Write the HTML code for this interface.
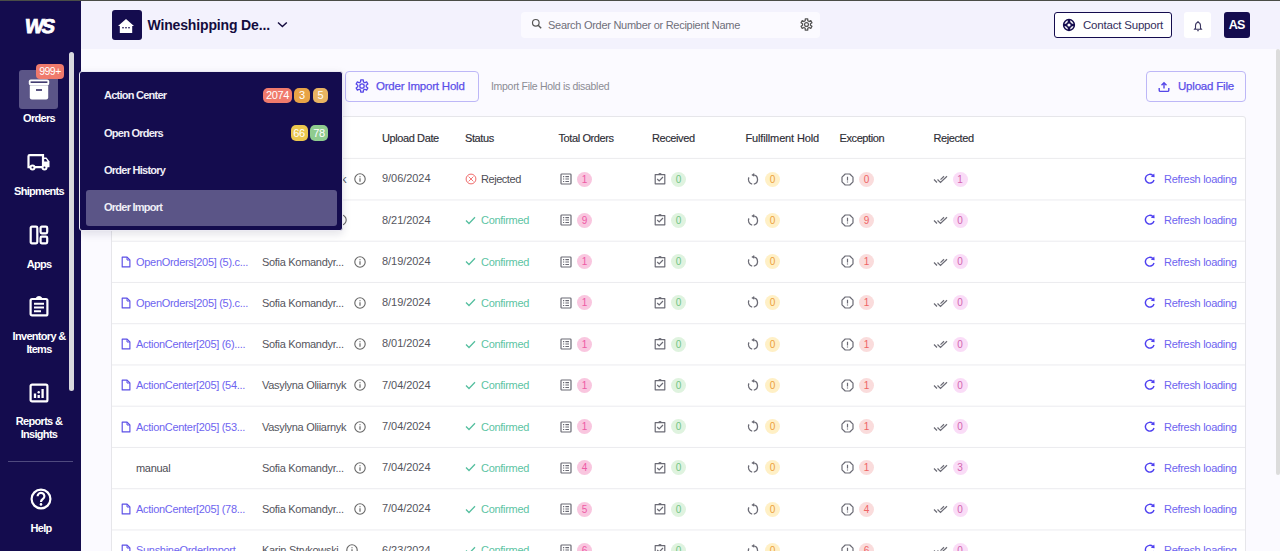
<!DOCTYPE html>
<html><head><meta charset="utf-8">
<style>
*{box-sizing:border-box;margin:0;padding:0}
html,body{width:1280px;height:551px;overflow:hidden;background:#fbfaff;font-family:"Liberation Sans",sans-serif;position:relative}
#topline{position:absolute;left:0;top:0;width:1280px;height:1px;background:#4a4d47;z-index:5}
#side{position:absolute;left:0;top:0;width:81px;height:551px;background:#140c4e}
#header{position:absolute;left:81px;top:1px;width:1199px;height:48px;background:#f3f2fd}
.sl{position:absolute;left:0;width:78px;text-align:center;color:#fff;font-size:11px;font-weight:bold;line-height:14px;letter-spacing:-0.7px;white-space:nowrap}
.th{position:absolute;top:130.5px;font-size:11px;color:#2e2e36;line-height:14px;letter-spacing:-0.4px;white-space:nowrap;-webkit-text-stroke:0.15px #2e2e36}
.t{position:absolute;font-size:11px;color:#4d4d55;line-height:14px;letter-spacing:-0.3px;white-space:nowrap}
.lnk{color:#6e64f0}
.nm{color:#55555d}
.dt{letter-spacing:-0.05px;color:#55555d}
.conf{color:#5cc4a3}
.bd{position:absolute;width:15px;height:15px;border-radius:8px;font-size:10px;line-height:15px;text-align:center}
.mi{position:absolute;left:104px;color:#efeef6;font-size:11px;font-weight:bold;line-height:14px;letter-spacing:-0.75px;white-space:nowrap}
.mb{position:absolute;height:15px;border-radius:5px;color:#fff;font-size:11px;line-height:15px;text-align:center;letter-spacing:-0.4px}
</style></head><body>
<div id="topline"></div>

<div id="header">
  <div style="position:absolute;left:31px;top:9px;width:30px;height:30px;border-radius:3px;background:#140c4e"></div>
  <svg width="18" height="16" viewBox="0 0 18 16" style="position:absolute;left:36.3px;top:17px"><path d="M9 1L17 8H15.2V15H2.8V8H1z" fill="#fff"/><rect x="5.3" y="9" width="1.4" height="1.4" fill="#140c4e"/><rect x="8.3" y="9" width="1.4" height="1.4" fill="#140c4e"/><rect x="11.3" y="9" width="1.4" height="1.4" fill="#140c4e"/></svg>
  <div style="position:absolute;left:66.5px;top:16px;font-size:14px;font-weight:bold;color:#140c3e;letter-spacing:-0.15px;line-height:17px;white-space:nowrap">Wineshipping De...</div>
  <svg width="11" height="7" viewBox="0 0 11 7" style="position:absolute;left:196.2px;top:20.3px"><path d="M1 1.4l4.4 4.2 4.4-4.2" fill="none" stroke="#140c3e" stroke-width="1.4"/></svg>
  <div style="position:absolute;left:440px;top:11px;width:299px;height:26px;border-radius:4px;background:#fbfaff"></div>
  <svg width="12" height="12" viewBox="0 0 12 12" style="position:absolute;left:449.5px;top:17px"><circle cx="4.8" cy="4.8" r="3.3" fill="none" stroke="#555" stroke-width="1.2"/><path d="M7.2 7.2L10.2 10.2" stroke="#555" stroke-width="1.4"/></svg>
  <div style="position:absolute;left:467px;top:17px;font-size:11px;color:#6f6f7a;letter-spacing:-0.28px;line-height:14px;white-space:nowrap">Search Order Number or Recipient Name</div>
  <svg width="13" height="13" viewBox="0 0 24 24" style="position:absolute;left:718.5px;top:17.3px"><path d="M9.59 5.00 L9.80 1.63 L14.20 1.63 L14.41 5.00 L16.85 6.42 L19.88 4.91 L22.08 8.72 L19.26 10.59 L19.26 13.41 L22.08 15.28 L19.88 19.09 L16.85 17.58 L14.41 19.00 L14.20 22.37 L9.80 22.37 L9.59 19.00 L7.15 17.58 L4.12 19.09 L1.92 15.28 L4.74 13.41 L4.74 10.59 L1.92 8.72 L4.12 4.91 L7.15 6.42Z" fill="none" stroke="#555" stroke-width="2.4" stroke-linejoin="round"/><circle cx="12" cy="12" r="3.6" fill="none" stroke="#555" stroke-width="2.2"/></svg>
  <div style="position:absolute;left:972.5px;top:11px;width:118.5px;height:26px;border:1.5px solid #140c4e;border-radius:3px;background:#fff"></div>
  <svg width="14" height="14" viewBox="0 0 14 14" style="position:absolute;left:981px;top:17.2px"><circle cx="7" cy="7" r="5.4" fill="none" stroke="#140c4e" stroke-width="1.5"/><circle cx="7" cy="7" r="2.3" fill="#fff" stroke="#140c4e" stroke-width="1.4"/><path d="M7 1.5v3.5M7 9v3.5M1.5 7h3.5M9 7h3.5" stroke="#140c4e" stroke-width="2.6"/></svg>
  <div style="position:absolute;left:1002px;top:17px;font-size:11.5px;color:#332d5c;letter-spacing:-0.2px;line-height:14px;white-space:nowrap">Contact Support</div>
  <div style="position:absolute;left:1103px;top:11px;width:27px;height:26px;border-radius:3px;background:#fff"></div>
  <svg width="10" height="12" viewBox="0 0 10 12" style="position:absolute;left:1111.5px;top:18.5px"><path d="M5 2.2q2.5.3 2.5 3.6v2.4l.9 1.1H1.6l.9-1.1V5.8Q2.5 2.5 5 2.2z" fill="none" stroke="#3a3560" stroke-width="1.1"/><path d="M5 1v1.2M4.3 10.6h1.4" stroke="#3a3560" stroke-width="1.1"/></svg>
  <div style="position:absolute;left:1142.5px;top:11px;width:26.5px;height:26px;border-radius:3px;background:#140c4e;color:#fff;font-size:12.5px;font-weight:bold;text-align:center;line-height:26px;letter-spacing:-0.6px">AS</div>
</div>

<div id="side">
  <div style="position:absolute;left:24.5px;top:14.5px;width:34px;color:#fff;font-size:20px;font-weight:bold;letter-spacing:-2.2px;line-height:23px;-webkit-text-stroke:0.8px #fff;transform:skewX(-9deg);white-space:nowrap">WS</div>
  <div style="position:absolute;left:69px;top:52px;width:5px;height:338.5px;border-radius:3px;background:#d9d9de"></div>
  <div style="position:absolute;left:19px;top:70px;width:39px;height:39px;border-radius:3px;background:#5b5587"></div>
  <svg width="22" height="22" viewBox="0 0 22 22" style="position:absolute;left:28px;top:78px"><rect x="0.8" y="1.6" width="20.4" height="6" rx="2" fill="#fff"/><rect x="2.6" y="3.5" width="16.8" height="1.3" fill="#140c4e"/><path d="M1.8 7.4h18.4v12a2 2 0 0 1-2 2H3.8a2 2 0 0 1-2-2z" fill="#fff"/><rect x="8" y="11.3" width="6" height="1.4" fill="#140c4e"/></svg>
  <div style="position:absolute;left:36px;top:64px;width:28px;height:15px;border-radius:4px;background:#ef7a6c;color:#fff;font-size:10.5px;line-height:15px;text-align:center;letter-spacing:-0.5px">999+</div>
  <div class="sl" style="top:111px">Orders</div>
  <svg width="24" height="20" viewBox="0 0 24 20" style="position:absolute;left:27px;top:152px"><path d="M1.5 4.3a1.2 1.2 0 0 1 1.2-1.2h13.3v12.1H1.5z" fill="none" stroke="#fff" stroke-width="2.2"/><path d="M16 5.5h3.5l3 4v5.7H16z" fill="#fff"/><path d="M17.2 7h1.8l1.6 2.4h-3.4z" fill="#140c4e"/><circle cx="5.5" cy="15.5" r="3" fill="#fff"/><circle cx="5.5" cy="15.5" r="1" fill="#140c4e"/><circle cx="17.5" cy="15.5" r="3" fill="#fff"/><circle cx="17.5" cy="15.5" r="1" fill="#140c4e"/></svg>
  <div class="sl" style="top:184px">Shipments</div>
  <svg width="20" height="20" viewBox="0 0 20 20" style="position:absolute;left:28.5px;top:224.5px"><rect x="1.7" y="1.7" width="6.6" height="16.6" rx="1.2" fill="none" stroke="#fff" stroke-width="2.2"/><rect x="11.6" y="1.7" width="6.6" height="6.6" rx="1.2" fill="none" stroke="#fff" stroke-width="2.2"/><rect x="11.6" y="11.7" width="6.6" height="6.6" rx="1.2" fill="none" stroke="#fff" stroke-width="2.2"/></svg>
  <div class="sl" style="top:257px">Apps</div>
  <svg width="20" height="22" viewBox="0 0 20 22" style="position:absolute;left:28.5px;top:295px"><rect x="1.6" y="4" width="16.8" height="16.4" rx="1.5" fill="none" stroke="#fff" stroke-width="2.2"/><path d="M7 4q3-4 6 0" fill="#fff" stroke="#fff" stroke-width="1.8"/><path d="M5 8.8h10M5 12.5h10M5 16.3h7" stroke="#fff" stroke-width="2"/></svg>
  <div class="sl" style="top:330px;line-height:13px">Inventory &amp;<br>Items</div>
  <svg width="20" height="20" viewBox="0 0 20 20" style="position:absolute;left:28.5px;top:382.5px"><rect x="1.6" y="1.6" width="16.8" height="16.8" rx="1.5" fill="none" stroke="#fff" stroke-width="2.2"/><path d="M6 10.5v4.5M9.7 12v3M13.6 6v9" stroke="#fff" stroke-width="2.3"/><circle cx="9.7" cy="9.3" r="1.2" fill="#fff"/></svg>
  <div class="sl" style="top:415px;line-height:13px">Reports &amp;<br>Insights</div>
  <div style="position:absolute;left:8px;top:460.5px;width:65px;height:1.5px;background:#4f4a7e"></div>
  <svg width="24" height="24" viewBox="0 0 24 24" style="position:absolute;left:28.6px;top:487px"><circle cx="12" cy="12" r="9.4" fill="none" stroke="#fff" stroke-width="2.2"/><path d="M8.6 9.3a3.4 3.3 0 1 1 5.2 2.7c-1.3.8-1.8 1.5-1.8 2.9" fill="none" stroke="#fff" stroke-width="2.2"/><circle cx="12" cy="17.4" r="1.3" fill="#fff"/></svg>
  <div class="sl" style="top:521px;left:2px">Help</div>
</div>

<div style="position:absolute;left:345px;top:71px;width:134px;height:31px;border:1px solid #bdb7f7;border-radius:4px;background:#fbfaff"></div>
<svg width="14" height="14" viewBox="0 0 24 24" style="position:absolute;left:355px;top:79.3px"><path d="M9.59 5.00 L9.80 1.63 L14.20 1.63 L14.41 5.00 L16.85 6.42 L19.88 4.91 L22.08 8.72 L19.26 10.59 L19.26 13.41 L22.08 15.28 L19.88 19.09 L16.85 17.58 L14.41 19.00 L14.20 22.37 L9.80 22.37 L9.59 19.00 L7.15 17.58 L4.12 19.09 L1.92 15.28 L4.74 13.41 L4.74 10.59 L1.92 8.72 L4.12 4.91 L7.15 6.42Z" fill="none" stroke="#5546e8" stroke-width="2.2" stroke-linejoin="round"/><circle cx="12" cy="12" r="3.8" fill="none" stroke="#5546e8" stroke-width="2.2"/></svg>
<div style="position:absolute;left:376px;top:78.5px;font-size:11.5px;font-weight:normal;-webkit-text-stroke:0.25px #5b4fe9;color:#5b4fe9;letter-spacing:-0.2px;line-height:14px;white-space:nowrap">Order Import Hold</div>
<div style="position:absolute;left:491px;top:80px;font-size:10.5px;color:#8c8c94;letter-spacing:-0.3px;line-height:13px;white-space:nowrap">Import File Hold is disabled</div>
<div style="position:absolute;left:1146px;top:71px;width:100px;height:31px;border:1px solid #bdb7f7;border-radius:4px;background:#fbfaff"></div>
<svg width="12" height="12" viewBox="0 0 12 12" style="position:absolute;left:1158px;top:81px"><path d="M1.2 7v2.2a1.2 1.2 0 0 0 1.2 1.2h7.2a1.2 1.2 0 0 0 1.2-1.2V7" fill="none" stroke="#5546e8" stroke-width="1.4"/><path d="M6 7.5V1.8M3.5 4.2L6 1.7l2.5 2.5" fill="none" stroke="#5546e8" stroke-width="1.4"/></svg>
<div style="position:absolute;left:1178px;top:78.5px;font-size:11.5px;font-weight:normal;-webkit-text-stroke:0.25px #5b4fe9;color:#5b4fe9;letter-spacing:-0.2px;line-height:14px;white-space:nowrap">Upload File</div>


<div style="position:absolute;left:111px;top:116px;width:1135px;height:460px;border:1px solid #e6e6ea;border-radius:3px;background:#fff"></div>
<div class="th" style="left:382px">Upload Date</div>
<div class="th" style="left:465px">Status</div>
<div class="th" style="left:558.5px">Total Orders</div>
<div class="th" style="left:652px">Received</div>
<div class="th" style="left:745.5px;letter-spacing:-0.15px">Fulfillment Hold</div>
<div class="th" style="left:839.5px">Exception</div>
<div class="th" style="left:933.5px">Rejected</div>
<svg width="1133" height="435" style="position:absolute;left:112px;top:116px" shape-rendering="geometricPrecision"><rect x="0" y="41.9" width="1133" height="1" fill="#ebebee"/><rect x="0" y="83.45" width="1133" height="1" fill="#ececef"/><rect x="0" y="124.70" width="1133" height="1" fill="#ececef"/><rect x="0" y="165.95" width="1133" height="1" fill="#ececef"/><rect x="0" y="207.20" width="1133" height="1" fill="#ececef"/><rect x="0" y="248.45" width="1133" height="1" fill="#ececef"/><rect x="0" y="289.70" width="1133" height="1" fill="#ececef"/><rect x="0" y="330.95" width="1133" height="1" fill="#ececef"/><rect x="0" y="372.20" width="1133" height="1" fill="#ececef"/><rect x="0" y="413.45" width="1133" height="1" fill="#ececef"/></svg>
<svg width="10" height="12" viewBox="0 0 10 12" style="position:absolute;left:121px;top:173px"><path d="M1.2 1.1h4.9l2.8 2.8v7H1.2z" fill="none" stroke="#5b4fe6" stroke-width="1.15" stroke-linejoin="round"/><path d="M6 1.1v2.9h2.9" fill="none" stroke="#5b4fe6" stroke-width="1"/></svg>
<div class="t lnk" style="left:136px;top:172.10px">ActionCenter</div>
<div class="t nm" style="left:262px;top:172.10px">Vasylyna Oliiarnyk</div>
<svg width="12" height="12" viewBox="0 0 12 12" style="position:absolute;left:354px;top:173px"><circle cx="6" cy="6" r="5.2" fill="none" stroke="#666" stroke-width="1.1"/><path d="M6 5.2v3.6M6 3.3v.9" stroke="#666" stroke-width="1.2"/></svg>
<div class="t dt" style="left:382px;top:171.30px">9/06/2024</div>
<svg width="12" height="12" viewBox="0 0 12 12" style="position:absolute;left:464.5px;top:173px"><circle cx="6" cy="6" r="4.9" fill="none" stroke="#f06a6a" stroke-width="1"/><path d="M3.6 3.6l4.8 4.8M8.4 3.6l-4.8 4.8" stroke="#f06a6a" stroke-width="0.9"/></svg>
<div class="t" style="left:481px;top:172.10px;letter-spacing:-0.45px">Rejected</div>
<svg width="12" height="12" viewBox="0 0 12 12" style="position:absolute;left:559.5px;top:173px"><rect x="1" y="1" width="10" height="10" rx="0.8" fill="none" stroke="#6b6b75" stroke-width="1.2"/><path d="M3 3.6h1.2M5.4 3.6h3.6M3 6h1.2M5.4 6h3.6M3 8.4h1.2M5.4 8.4h3.6" stroke="#6b6b75" stroke-width="1.05"/></svg>
<svg width="12" height="13" viewBox="0 0 12 13" style="position:absolute;left:653.5px;top:172px"><path d="M1.2 2.6h9.6v9.2H1.2z" fill="none" stroke="#6b6b75" stroke-width="1.2" stroke-linejoin="round"/><path d="M4.5 2.6q1.5-2 3 0" fill="none" stroke="#6b6b75" stroke-width="1.1"/><path d="M3.2 7l2 2 3.8-4" fill="none" stroke="#6b6b75" stroke-width="1.2"/></svg>
<svg width="12" height="13" viewBox="0 0 12 13" style="position:absolute;left:747px;top:173px"><path d="M6.2 1.92A4.6 4.6 0 0 1 6.80 11.03M5.20 11.03A4.6 4.6 0 0 1 1.9 4.4" fill="none" stroke="#6b6b75" stroke-width="1.3"/><path d="M7.2 0.1v3.6L4.3 1.9z" fill="#6b6b75"/></svg>
<svg width="13" height="13" viewBox="0 0 13 13" style="position:absolute;left:840.5px;top:173px"><path d="M4.2 1h4.6L12 4.2v4.6L8.8 12H4.2L1 8.8V4.2z" fill="none" stroke="#6b6b75" stroke-width="1.2" stroke-linejoin="round"/><path d="M6.5 3.8v3.6M6.5 8.6v1" stroke="#6b6b75" stroke-width="1.2"/></svg>
<svg width="16" height="10" viewBox="0 0 16 10" style="position:absolute;left:932.5px;top:175px"><path d="M1 4.5l3 3M4.5 4.5l3 3L14 1.2M7.5 4.6L11 1.2" fill="none" stroke="#6b6b75" stroke-width="1.2"/></svg>
<div class="bd" style="left:577px;top:172px;background:#f9c6df;color:#ee5aa5">1</div>
<div class="bd" style="left:671px;top:172px;background:#dff3df;color:#72c484">0</div>
<div class="bd" style="left:765px;top:172px;background:#fff0c6;color:#eca03c">0</div>
<div class="bd" style="left:859px;top:172px;background:#fadcdc;color:#ef6464">0</div>
<div class="bd" style="left:952.5px;top:172px;background:#fadcf7;color:#d264ae">1</div>
<svg width="12" height="12" viewBox="0 0 12 12" style="position:absolute;left:1144px;top:173px"><path d="M10 7A4.4 4.4 0 1 1 8.9 2.6" fill="none" stroke="#4d3ff0" stroke-width="1.4"/><path d="M6.8 3.8L10.6 4.2 10.3 0.6z" fill="#4d3ff0"/></svg>
<div class="t lnk" style="left:1164px;top:172.10px">Refresh loading</div>
<svg width="10" height="12" viewBox="0 0 10 12" style="position:absolute;left:121px;top:214px"><path d="M1.2 1.1h4.9l2.8 2.8v7H1.2z" fill="none" stroke="#5b4fe6" stroke-width="1.15" stroke-linejoin="round"/><path d="M6 1.1v2.9h2.9" fill="none" stroke="#5b4fe6" stroke-width="1"/></svg>
<div class="t lnk" style="left:136px;top:213.35px">ActionCenter</div>
<div class="t nm" style="left:262px;top:213.35px">Karin Strykows</div>
<svg width="12" height="12" viewBox="0 0 12 12" style="position:absolute;left:335px;top:214px"><circle cx="6" cy="6" r="5.2" fill="none" stroke="#666" stroke-width="1.1"/><path d="M6 5.2v3.6M6 3.3v.9" stroke="#666" stroke-width="1.2"/></svg>
<div class="t dt" style="left:382px;top:212.55px">8/21/2024</div>
<svg width="11" height="9" viewBox="0 0 11 9" style="position:absolute;left:465px;top:216px"><path d="M1 4.5l3 3L10 1.2" fill="none" stroke="#55bf9f" stroke-width="1.3"/></svg>
<div class="t conf" style="left:481px;top:213.35px">Confirmed</div>
<svg width="12" height="12" viewBox="0 0 12 12" style="position:absolute;left:559.5px;top:214px"><rect x="1" y="1" width="10" height="10" rx="0.8" fill="none" stroke="#6b6b75" stroke-width="1.2"/><path d="M3 3.6h1.2M5.4 3.6h3.6M3 6h1.2M5.4 6h3.6M3 8.4h1.2M5.4 8.4h3.6" stroke="#6b6b75" stroke-width="1.05"/></svg>
<svg width="12" height="13" viewBox="0 0 12 13" style="position:absolute;left:653.5px;top:213px"><path d="M1.2 2.6h9.6v9.2H1.2z" fill="none" stroke="#6b6b75" stroke-width="1.2" stroke-linejoin="round"/><path d="M4.5 2.6q1.5-2 3 0" fill="none" stroke="#6b6b75" stroke-width="1.1"/><path d="M3.2 7l2 2 3.8-4" fill="none" stroke="#6b6b75" stroke-width="1.2"/></svg>
<svg width="12" height="13" viewBox="0 0 12 13" style="position:absolute;left:747px;top:214px"><path d="M6.2 1.92A4.6 4.6 0 0 1 6.80 11.03M5.20 11.03A4.6 4.6 0 0 1 1.9 4.4" fill="none" stroke="#6b6b75" stroke-width="1.3"/><path d="M7.2 0.1v3.6L4.3 1.9z" fill="#6b6b75"/></svg>
<svg width="13" height="13" viewBox="0 0 13 13" style="position:absolute;left:840.5px;top:214px"><path d="M4.2 1h4.6L12 4.2v4.6L8.8 12H4.2L1 8.8V4.2z" fill="none" stroke="#6b6b75" stroke-width="1.2" stroke-linejoin="round"/><path d="M6.5 3.8v3.6M6.5 8.6v1" stroke="#6b6b75" stroke-width="1.2"/></svg>
<svg width="16" height="10" viewBox="0 0 16 10" style="position:absolute;left:932.5px;top:216px"><path d="M1 4.5l3 3M4.5 4.5l3 3L14 1.2M7.5 4.6L11 1.2" fill="none" stroke="#6b6b75" stroke-width="1.2"/></svg>
<div class="bd" style="left:577px;top:213px;background:#f9c6df;color:#ee5aa5">9</div>
<div class="bd" style="left:671px;top:213px;background:#dff3df;color:#72c484">0</div>
<div class="bd" style="left:765px;top:213px;background:#fff0c6;color:#eca03c">0</div>
<div class="bd" style="left:859px;top:213px;background:#fadcdc;color:#ef6464">9</div>
<div class="bd" style="left:952.5px;top:213px;background:#fadcf7;color:#d264ae">0</div>
<svg width="12" height="12" viewBox="0 0 12 12" style="position:absolute;left:1144px;top:214px"><path d="M10 7A4.4 4.4 0 1 1 8.9 2.6" fill="none" stroke="#4d3ff0" stroke-width="1.4"/><path d="M6.8 3.8L10.6 4.2 10.3 0.6z" fill="#4d3ff0"/></svg>
<div class="t lnk" style="left:1164px;top:213.35px">Refresh loading</div>
<svg width="10" height="12" viewBox="0 0 10 12" style="position:absolute;left:121px;top:256px"><path d="M1.2 1.1h4.9l2.8 2.8v7H1.2z" fill="none" stroke="#5b4fe6" stroke-width="1.15" stroke-linejoin="round"/><path d="M6 1.1v2.9h2.9" fill="none" stroke="#5b4fe6" stroke-width="1"/></svg>
<div class="t lnk" style="left:136px;top:254.60px">OpenOrders[205] (5).c...</div>
<div class="t nm" style="left:262px;top:254.60px">Sofia Komandyr...</div>
<svg width="12" height="12" viewBox="0 0 12 12" style="position:absolute;left:354px;top:256px"><circle cx="6" cy="6" r="5.2" fill="none" stroke="#666" stroke-width="1.1"/><path d="M6 5.2v3.6M6 3.3v.9" stroke="#666" stroke-width="1.2"/></svg>
<div class="t dt" style="left:382px;top:253.80px">8/19/2024</div>
<svg width="11" height="9" viewBox="0 0 11 9" style="position:absolute;left:465px;top:257px"><path d="M1 4.5l3 3L10 1.2" fill="none" stroke="#55bf9f" stroke-width="1.3"/></svg>
<div class="t conf" style="left:481px;top:254.60px">Confirmed</div>
<svg width="12" height="12" viewBox="0 0 12 12" style="position:absolute;left:559.5px;top:256px"><rect x="1" y="1" width="10" height="10" rx="0.8" fill="none" stroke="#6b6b75" stroke-width="1.2"/><path d="M3 3.6h1.2M5.4 3.6h3.6M3 6h1.2M5.4 6h3.6M3 8.4h1.2M5.4 8.4h3.6" stroke="#6b6b75" stroke-width="1.05"/></svg>
<svg width="12" height="13" viewBox="0 0 12 13" style="position:absolute;left:653.5px;top:255px"><path d="M1.2 2.6h9.6v9.2H1.2z" fill="none" stroke="#6b6b75" stroke-width="1.2" stroke-linejoin="round"/><path d="M4.5 2.6q1.5-2 3 0" fill="none" stroke="#6b6b75" stroke-width="1.1"/><path d="M3.2 7l2 2 3.8-4" fill="none" stroke="#6b6b75" stroke-width="1.2"/></svg>
<svg width="12" height="13" viewBox="0 0 12 13" style="position:absolute;left:747px;top:255px"><path d="M6.2 1.92A4.6 4.6 0 0 1 6.80 11.03M5.20 11.03A4.6 4.6 0 0 1 1.9 4.4" fill="none" stroke="#6b6b75" stroke-width="1.3"/><path d="M7.2 0.1v3.6L4.3 1.9z" fill="#6b6b75"/></svg>
<svg width="13" height="13" viewBox="0 0 13 13" style="position:absolute;left:840.5px;top:255px"><path d="M4.2 1h4.6L12 4.2v4.6L8.8 12H4.2L1 8.8V4.2z" fill="none" stroke="#6b6b75" stroke-width="1.2" stroke-linejoin="round"/><path d="M6.5 3.8v3.6M6.5 8.6v1" stroke="#6b6b75" stroke-width="1.2"/></svg>
<svg width="16" height="10" viewBox="0 0 16 10" style="position:absolute;left:932.5px;top:258px"><path d="M1 4.5l3 3M4.5 4.5l3 3L14 1.2M7.5 4.6L11 1.2" fill="none" stroke="#6b6b75" stroke-width="1.2"/></svg>
<div class="bd" style="left:577px;top:254px;background:#f9c6df;color:#ee5aa5">1</div>
<div class="bd" style="left:671px;top:254px;background:#dff3df;color:#72c484">0</div>
<div class="bd" style="left:765px;top:254px;background:#fff0c6;color:#eca03c">0</div>
<div class="bd" style="left:859px;top:254px;background:#fadcdc;color:#ef6464">1</div>
<div class="bd" style="left:952.5px;top:254px;background:#fadcf7;color:#d264ae">0</div>
<svg width="12" height="12" viewBox="0 0 12 12" style="position:absolute;left:1144px;top:256px"><path d="M10 7A4.4 4.4 0 1 1 8.9 2.6" fill="none" stroke="#4d3ff0" stroke-width="1.4"/><path d="M6.8 3.8L10.6 4.2 10.3 0.6z" fill="#4d3ff0"/></svg>
<div class="t lnk" style="left:1164px;top:254.60px">Refresh loading</div>
<svg width="10" height="12" viewBox="0 0 10 12" style="position:absolute;left:121px;top:297px"><path d="M1.2 1.1h4.9l2.8 2.8v7H1.2z" fill="none" stroke="#5b4fe6" stroke-width="1.15" stroke-linejoin="round"/><path d="M6 1.1v2.9h2.9" fill="none" stroke="#5b4fe6" stroke-width="1"/></svg>
<div class="t lnk" style="left:136px;top:295.85px">OpenOrders[205] (5).c...</div>
<div class="t nm" style="left:262px;top:295.85px">Sofia Komandyr...</div>
<svg width="12" height="12" viewBox="0 0 12 12" style="position:absolute;left:354px;top:297px"><circle cx="6" cy="6" r="5.2" fill="none" stroke="#666" stroke-width="1.1"/><path d="M6 5.2v3.6M6 3.3v.9" stroke="#666" stroke-width="1.2"/></svg>
<div class="t dt" style="left:382px;top:295.05px">8/19/2024</div>
<svg width="11" height="9" viewBox="0 0 11 9" style="position:absolute;left:465px;top:298px"><path d="M1 4.5l3 3L10 1.2" fill="none" stroke="#55bf9f" stroke-width="1.3"/></svg>
<div class="t conf" style="left:481px;top:295.85px">Confirmed</div>
<svg width="12" height="12" viewBox="0 0 12 12" style="position:absolute;left:559.5px;top:297px"><rect x="1" y="1" width="10" height="10" rx="0.8" fill="none" stroke="#6b6b75" stroke-width="1.2"/><path d="M3 3.6h1.2M5.4 3.6h3.6M3 6h1.2M5.4 6h3.6M3 8.4h1.2M5.4 8.4h3.6" stroke="#6b6b75" stroke-width="1.05"/></svg>
<svg width="12" height="13" viewBox="0 0 12 13" style="position:absolute;left:653.5px;top:296px"><path d="M1.2 2.6h9.6v9.2H1.2z" fill="none" stroke="#6b6b75" stroke-width="1.2" stroke-linejoin="round"/><path d="M4.5 2.6q1.5-2 3 0" fill="none" stroke="#6b6b75" stroke-width="1.1"/><path d="M3.2 7l2 2 3.8-4" fill="none" stroke="#6b6b75" stroke-width="1.2"/></svg>
<svg width="12" height="13" viewBox="0 0 12 13" style="position:absolute;left:747px;top:296px"><path d="M6.2 1.92A4.6 4.6 0 0 1 6.80 11.03M5.20 11.03A4.6 4.6 0 0 1 1.9 4.4" fill="none" stroke="#6b6b75" stroke-width="1.3"/><path d="M7.2 0.1v3.6L4.3 1.9z" fill="#6b6b75"/></svg>
<svg width="13" height="13" viewBox="0 0 13 13" style="position:absolute;left:840.5px;top:296px"><path d="M4.2 1h4.6L12 4.2v4.6L8.8 12H4.2L1 8.8V4.2z" fill="none" stroke="#6b6b75" stroke-width="1.2" stroke-linejoin="round"/><path d="M6.5 3.8v3.6M6.5 8.6v1" stroke="#6b6b75" stroke-width="1.2"/></svg>
<svg width="16" height="10" viewBox="0 0 16 10" style="position:absolute;left:932.5px;top:299px"><path d="M1 4.5l3 3M4.5 4.5l3 3L14 1.2M7.5 4.6L11 1.2" fill="none" stroke="#6b6b75" stroke-width="1.2"/></svg>
<div class="bd" style="left:577px;top:295px;background:#f9c6df;color:#ee5aa5">1</div>
<div class="bd" style="left:671px;top:295px;background:#dff3df;color:#72c484">0</div>
<div class="bd" style="left:765px;top:295px;background:#fff0c6;color:#eca03c">0</div>
<div class="bd" style="left:859px;top:295px;background:#fadcdc;color:#ef6464">1</div>
<div class="bd" style="left:952.5px;top:295px;background:#fadcf7;color:#d264ae">0</div>
<svg width="12" height="12" viewBox="0 0 12 12" style="position:absolute;left:1144px;top:297px"><path d="M10 7A4.4 4.4 0 1 1 8.9 2.6" fill="none" stroke="#4d3ff0" stroke-width="1.4"/><path d="M6.8 3.8L10.6 4.2 10.3 0.6z" fill="#4d3ff0"/></svg>
<div class="t lnk" style="left:1164px;top:295.85px">Refresh loading</div>
<svg width="10" height="12" viewBox="0 0 10 12" style="position:absolute;left:121px;top:338px"><path d="M1.2 1.1h4.9l2.8 2.8v7H1.2z" fill="none" stroke="#5b4fe6" stroke-width="1.15" stroke-linejoin="round"/><path d="M6 1.1v2.9h2.9" fill="none" stroke="#5b4fe6" stroke-width="1"/></svg>
<div class="t lnk" style="left:136px;top:337.10px">ActionCenter[205] (6)....</div>
<div class="t nm" style="left:262px;top:337.10px">Sofia Komandyr...</div>
<svg width="12" height="12" viewBox="0 0 12 12" style="position:absolute;left:354px;top:338px"><circle cx="6" cy="6" r="5.2" fill="none" stroke="#666" stroke-width="1.1"/><path d="M6 5.2v3.6M6 3.3v.9" stroke="#666" stroke-width="1.2"/></svg>
<div class="t dt" style="left:382px;top:336.30px">8/01/2024</div>
<svg width="11" height="9" viewBox="0 0 11 9" style="position:absolute;left:465px;top:340px"><path d="M1 4.5l3 3L10 1.2" fill="none" stroke="#55bf9f" stroke-width="1.3"/></svg>
<div class="t conf" style="left:481px;top:337.10px">Confirmed</div>
<svg width="12" height="12" viewBox="0 0 12 12" style="position:absolute;left:559.5px;top:338px"><rect x="1" y="1" width="10" height="10" rx="0.8" fill="none" stroke="#6b6b75" stroke-width="1.2"/><path d="M3 3.6h1.2M5.4 3.6h3.6M3 6h1.2M5.4 6h3.6M3 8.4h1.2M5.4 8.4h3.6" stroke="#6b6b75" stroke-width="1.05"/></svg>
<svg width="12" height="13" viewBox="0 0 12 13" style="position:absolute;left:653.5px;top:337px"><path d="M1.2 2.6h9.6v9.2H1.2z" fill="none" stroke="#6b6b75" stroke-width="1.2" stroke-linejoin="round"/><path d="M4.5 2.6q1.5-2 3 0" fill="none" stroke="#6b6b75" stroke-width="1.1"/><path d="M3.2 7l2 2 3.8-4" fill="none" stroke="#6b6b75" stroke-width="1.2"/></svg>
<svg width="12" height="13" viewBox="0 0 12 13" style="position:absolute;left:747px;top:338px"><path d="M6.2 1.92A4.6 4.6 0 0 1 6.80 11.03M5.20 11.03A4.6 4.6 0 0 1 1.9 4.4" fill="none" stroke="#6b6b75" stroke-width="1.3"/><path d="M7.2 0.1v3.6L4.3 1.9z" fill="#6b6b75"/></svg>
<svg width="13" height="13" viewBox="0 0 13 13" style="position:absolute;left:840.5px;top:338px"><path d="M4.2 1h4.6L12 4.2v4.6L8.8 12H4.2L1 8.8V4.2z" fill="none" stroke="#6b6b75" stroke-width="1.2" stroke-linejoin="round"/><path d="M6.5 3.8v3.6M6.5 8.6v1" stroke="#6b6b75" stroke-width="1.2"/></svg>
<svg width="16" height="10" viewBox="0 0 16 10" style="position:absolute;left:932.5px;top:340px"><path d="M1 4.5l3 3M4.5 4.5l3 3L14 1.2M7.5 4.6L11 1.2" fill="none" stroke="#6b6b75" stroke-width="1.2"/></svg>
<div class="bd" style="left:577px;top:337px;background:#f9c6df;color:#ee5aa5">1</div>
<div class="bd" style="left:671px;top:337px;background:#dff3df;color:#72c484">0</div>
<div class="bd" style="left:765px;top:337px;background:#fff0c6;color:#eca03c">0</div>
<div class="bd" style="left:859px;top:337px;background:#fadcdc;color:#ef6464">1</div>
<div class="bd" style="left:952.5px;top:337px;background:#fadcf7;color:#d264ae">0</div>
<svg width="12" height="12" viewBox="0 0 12 12" style="position:absolute;left:1144px;top:338px"><path d="M10 7A4.4 4.4 0 1 1 8.9 2.6" fill="none" stroke="#4d3ff0" stroke-width="1.4"/><path d="M6.8 3.8L10.6 4.2 10.3 0.6z" fill="#4d3ff0"/></svg>
<div class="t lnk" style="left:1164px;top:337.10px">Refresh loading</div>
<svg width="10" height="12" viewBox="0 0 10 12" style="position:absolute;left:121px;top:379px"><path d="M1.2 1.1h4.9l2.8 2.8v7H1.2z" fill="none" stroke="#5b4fe6" stroke-width="1.15" stroke-linejoin="round"/><path d="M6 1.1v2.9h2.9" fill="none" stroke="#5b4fe6" stroke-width="1"/></svg>
<div class="t lnk" style="left:136px;top:378.35px">ActionCenter[205] (54...</div>
<div class="t nm" style="left:262px;top:378.35px">Vasylyna Oliiarnyk</div>
<svg width="12" height="12" viewBox="0 0 12 12" style="position:absolute;left:354px;top:379px"><circle cx="6" cy="6" r="5.2" fill="none" stroke="#666" stroke-width="1.1"/><path d="M6 5.2v3.6M6 3.3v.9" stroke="#666" stroke-width="1.2"/></svg>
<div class="t dt" style="left:382px;top:377.55px">7/04/2024</div>
<svg width="11" height="9" viewBox="0 0 11 9" style="position:absolute;left:465px;top:381px"><path d="M1 4.5l3 3L10 1.2" fill="none" stroke="#55bf9f" stroke-width="1.3"/></svg>
<div class="t conf" style="left:481px;top:378.35px">Confirmed</div>
<svg width="12" height="12" viewBox="0 0 12 12" style="position:absolute;left:559.5px;top:379px"><rect x="1" y="1" width="10" height="10" rx="0.8" fill="none" stroke="#6b6b75" stroke-width="1.2"/><path d="M3 3.6h1.2M5.4 3.6h3.6M3 6h1.2M5.4 6h3.6M3 8.4h1.2M5.4 8.4h3.6" stroke="#6b6b75" stroke-width="1.05"/></svg>
<svg width="12" height="13" viewBox="0 0 12 13" style="position:absolute;left:653.5px;top:378px"><path d="M1.2 2.6h9.6v9.2H1.2z" fill="none" stroke="#6b6b75" stroke-width="1.2" stroke-linejoin="round"/><path d="M4.5 2.6q1.5-2 3 0" fill="none" stroke="#6b6b75" stroke-width="1.1"/><path d="M3.2 7l2 2 3.8-4" fill="none" stroke="#6b6b75" stroke-width="1.2"/></svg>
<svg width="12" height="13" viewBox="0 0 12 13" style="position:absolute;left:747px;top:379px"><path d="M6.2 1.92A4.6 4.6 0 0 1 6.80 11.03M5.20 11.03A4.6 4.6 0 0 1 1.9 4.4" fill="none" stroke="#6b6b75" stroke-width="1.3"/><path d="M7.2 0.1v3.6L4.3 1.9z" fill="#6b6b75"/></svg>
<svg width="13" height="13" viewBox="0 0 13 13" style="position:absolute;left:840.5px;top:379px"><path d="M4.2 1h4.6L12 4.2v4.6L8.8 12H4.2L1 8.8V4.2z" fill="none" stroke="#6b6b75" stroke-width="1.2" stroke-linejoin="round"/><path d="M6.5 3.8v3.6M6.5 8.6v1" stroke="#6b6b75" stroke-width="1.2"/></svg>
<svg width="16" height="10" viewBox="0 0 16 10" style="position:absolute;left:932.5px;top:381px"><path d="M1 4.5l3 3M4.5 4.5l3 3L14 1.2M7.5 4.6L11 1.2" fill="none" stroke="#6b6b75" stroke-width="1.2"/></svg>
<div class="bd" style="left:577px;top:378px;background:#f9c6df;color:#ee5aa5">1</div>
<div class="bd" style="left:671px;top:378px;background:#dff3df;color:#72c484">0</div>
<div class="bd" style="left:765px;top:378px;background:#fff0c6;color:#eca03c">0</div>
<div class="bd" style="left:859px;top:378px;background:#fadcdc;color:#ef6464">1</div>
<div class="bd" style="left:952.5px;top:378px;background:#fadcf7;color:#d264ae">0</div>
<svg width="12" height="12" viewBox="0 0 12 12" style="position:absolute;left:1144px;top:379px"><path d="M10 7A4.4 4.4 0 1 1 8.9 2.6" fill="none" stroke="#4d3ff0" stroke-width="1.4"/><path d="M6.8 3.8L10.6 4.2 10.3 0.6z" fill="#4d3ff0"/></svg>
<div class="t lnk" style="left:1164px;top:378.35px">Refresh loading</div>
<svg width="10" height="12" viewBox="0 0 10 12" style="position:absolute;left:121px;top:421px"><path d="M1.2 1.1h4.9l2.8 2.8v7H1.2z" fill="none" stroke="#5b4fe6" stroke-width="1.15" stroke-linejoin="round"/><path d="M6 1.1v2.9h2.9" fill="none" stroke="#5b4fe6" stroke-width="1"/></svg>
<div class="t lnk" style="left:136px;top:419.60px">ActionCenter[205] (53...</div>
<div class="t nm" style="left:262px;top:419.60px">Vasylyna Oliiarnyk</div>
<svg width="12" height="12" viewBox="0 0 12 12" style="position:absolute;left:354px;top:421px"><circle cx="6" cy="6" r="5.2" fill="none" stroke="#666" stroke-width="1.1"/><path d="M6 5.2v3.6M6 3.3v.9" stroke="#666" stroke-width="1.2"/></svg>
<div class="t dt" style="left:382px;top:418.80px">7/04/2024</div>
<svg width="11" height="9" viewBox="0 0 11 9" style="position:absolute;left:465px;top:422px"><path d="M1 4.5l3 3L10 1.2" fill="none" stroke="#55bf9f" stroke-width="1.3"/></svg>
<div class="t conf" style="left:481px;top:419.60px">Confirmed</div>
<svg width="12" height="12" viewBox="0 0 12 12" style="position:absolute;left:559.5px;top:421px"><rect x="1" y="1" width="10" height="10" rx="0.8" fill="none" stroke="#6b6b75" stroke-width="1.2"/><path d="M3 3.6h1.2M5.4 3.6h3.6M3 6h1.2M5.4 6h3.6M3 8.4h1.2M5.4 8.4h3.6" stroke="#6b6b75" stroke-width="1.05"/></svg>
<svg width="12" height="13" viewBox="0 0 12 13" style="position:absolute;left:653.5px;top:420px"><path d="M1.2 2.6h9.6v9.2H1.2z" fill="none" stroke="#6b6b75" stroke-width="1.2" stroke-linejoin="round"/><path d="M4.5 2.6q1.5-2 3 0" fill="none" stroke="#6b6b75" stroke-width="1.1"/><path d="M3.2 7l2 2 3.8-4" fill="none" stroke="#6b6b75" stroke-width="1.2"/></svg>
<svg width="12" height="13" viewBox="0 0 12 13" style="position:absolute;left:747px;top:420px"><path d="M6.2 1.92A4.6 4.6 0 0 1 6.80 11.03M5.20 11.03A4.6 4.6 0 0 1 1.9 4.4" fill="none" stroke="#6b6b75" stroke-width="1.3"/><path d="M7.2 0.1v3.6L4.3 1.9z" fill="#6b6b75"/></svg>
<svg width="13" height="13" viewBox="0 0 13 13" style="position:absolute;left:840.5px;top:420px"><path d="M4.2 1h4.6L12 4.2v4.6L8.8 12H4.2L1 8.8V4.2z" fill="none" stroke="#6b6b75" stroke-width="1.2" stroke-linejoin="round"/><path d="M6.5 3.8v3.6M6.5 8.6v1" stroke="#6b6b75" stroke-width="1.2"/></svg>
<svg width="16" height="10" viewBox="0 0 16 10" style="position:absolute;left:932.5px;top:423px"><path d="M1 4.5l3 3M4.5 4.5l3 3L14 1.2M7.5 4.6L11 1.2" fill="none" stroke="#6b6b75" stroke-width="1.2"/></svg>
<div class="bd" style="left:577px;top:419px;background:#f9c6df;color:#ee5aa5">1</div>
<div class="bd" style="left:671px;top:419px;background:#dff3df;color:#72c484">0</div>
<div class="bd" style="left:765px;top:419px;background:#fff0c6;color:#eca03c">0</div>
<div class="bd" style="left:859px;top:419px;background:#fadcdc;color:#ef6464">1</div>
<div class="bd" style="left:952.5px;top:419px;background:#fadcf7;color:#d264ae">0</div>
<svg width="12" height="12" viewBox="0 0 12 12" style="position:absolute;left:1144px;top:421px"><path d="M10 7A4.4 4.4 0 1 1 8.9 2.6" fill="none" stroke="#4d3ff0" stroke-width="1.4"/><path d="M6.8 3.8L10.6 4.2 10.3 0.6z" fill="#4d3ff0"/></svg>
<div class="t lnk" style="left:1164px;top:419.60px">Refresh loading</div>
<div class="t" style="left:136px;top:460.85px">manual</div>
<div class="t nm" style="left:262px;top:460.85px">Sofia Komandyr...</div>
<svg width="12" height="12" viewBox="0 0 12 12" style="position:absolute;left:354px;top:462px"><circle cx="6" cy="6" r="5.2" fill="none" stroke="#666" stroke-width="1.1"/><path d="M6 5.2v3.6M6 3.3v.9" stroke="#666" stroke-width="1.2"/></svg>
<div class="t dt" style="left:382px;top:460.05px">7/04/2024</div>
<svg width="11" height="9" viewBox="0 0 11 9" style="position:absolute;left:465px;top:463px"><path d="M1 4.5l3 3L10 1.2" fill="none" stroke="#55bf9f" stroke-width="1.3"/></svg>
<div class="t conf" style="left:481px;top:460.85px">Confirmed</div>
<svg width="12" height="12" viewBox="0 0 12 12" style="position:absolute;left:559.5px;top:462px"><rect x="1" y="1" width="10" height="10" rx="0.8" fill="none" stroke="#6b6b75" stroke-width="1.2"/><path d="M3 3.6h1.2M5.4 3.6h3.6M3 6h1.2M5.4 6h3.6M3 8.4h1.2M5.4 8.4h3.6" stroke="#6b6b75" stroke-width="1.05"/></svg>
<svg width="12" height="13" viewBox="0 0 12 13" style="position:absolute;left:653.5px;top:461px"><path d="M1.2 2.6h9.6v9.2H1.2z" fill="none" stroke="#6b6b75" stroke-width="1.2" stroke-linejoin="round"/><path d="M4.5 2.6q1.5-2 3 0" fill="none" stroke="#6b6b75" stroke-width="1.1"/><path d="M3.2 7l2 2 3.8-4" fill="none" stroke="#6b6b75" stroke-width="1.2"/></svg>
<svg width="12" height="13" viewBox="0 0 12 13" style="position:absolute;left:747px;top:461px"><path d="M6.2 1.92A4.6 4.6 0 0 1 6.80 11.03M5.20 11.03A4.6 4.6 0 0 1 1.9 4.4" fill="none" stroke="#6b6b75" stroke-width="1.3"/><path d="M7.2 0.1v3.6L4.3 1.9z" fill="#6b6b75"/></svg>
<svg width="13" height="13" viewBox="0 0 13 13" style="position:absolute;left:840.5px;top:461px"><path d="M4.2 1h4.6L12 4.2v4.6L8.8 12H4.2L1 8.8V4.2z" fill="none" stroke="#6b6b75" stroke-width="1.2" stroke-linejoin="round"/><path d="M6.5 3.8v3.6M6.5 8.6v1" stroke="#6b6b75" stroke-width="1.2"/></svg>
<svg width="16" height="10" viewBox="0 0 16 10" style="position:absolute;left:932.5px;top:464px"><path d="M1 4.5l3 3M4.5 4.5l3 3L14 1.2M7.5 4.6L11 1.2" fill="none" stroke="#6b6b75" stroke-width="1.2"/></svg>
<div class="bd" style="left:577px;top:460px;background:#f9c6df;color:#ee5aa5">4</div>
<div class="bd" style="left:671px;top:460px;background:#dff3df;color:#72c484">0</div>
<div class="bd" style="left:765px;top:460px;background:#fff0c6;color:#eca03c">0</div>
<div class="bd" style="left:859px;top:460px;background:#fadcdc;color:#ef6464">1</div>
<div class="bd" style="left:952.5px;top:460px;background:#fadcf7;color:#d264ae">3</div>
<svg width="12" height="12" viewBox="0 0 12 12" style="position:absolute;left:1144px;top:462px"><path d="M10 7A4.4 4.4 0 1 1 8.9 2.6" fill="none" stroke="#4d3ff0" stroke-width="1.4"/><path d="M6.8 3.8L10.6 4.2 10.3 0.6z" fill="#4d3ff0"/></svg>
<div class="t lnk" style="left:1164px;top:460.85px">Refresh loading</div>
<svg width="10" height="12" viewBox="0 0 10 12" style="position:absolute;left:121px;top:503px"><path d="M1.2 1.1h4.9l2.8 2.8v7H1.2z" fill="none" stroke="#5b4fe6" stroke-width="1.15" stroke-linejoin="round"/><path d="M6 1.1v2.9h2.9" fill="none" stroke="#5b4fe6" stroke-width="1"/></svg>
<div class="t lnk" style="left:136px;top:502.10px">ActionCenter[205] (78...</div>
<div class="t nm" style="left:262px;top:502.10px">Sofia Komandyr...</div>
<svg width="12" height="12" viewBox="0 0 12 12" style="position:absolute;left:354px;top:503px"><circle cx="6" cy="6" r="5.2" fill="none" stroke="#666" stroke-width="1.1"/><path d="M6 5.2v3.6M6 3.3v.9" stroke="#666" stroke-width="1.2"/></svg>
<div class="t dt" style="left:382px;top:501.30px">7/04/2024</div>
<svg width="11" height="9" viewBox="0 0 11 9" style="position:absolute;left:465px;top:505px"><path d="M1 4.5l3 3L10 1.2" fill="none" stroke="#55bf9f" stroke-width="1.3"/></svg>
<div class="t conf" style="left:481px;top:502.10px">Confirmed</div>
<svg width="12" height="12" viewBox="0 0 12 12" style="position:absolute;left:559.5px;top:503px"><rect x="1" y="1" width="10" height="10" rx="0.8" fill="none" stroke="#6b6b75" stroke-width="1.2"/><path d="M3 3.6h1.2M5.4 3.6h3.6M3 6h1.2M5.4 6h3.6M3 8.4h1.2M5.4 8.4h3.6" stroke="#6b6b75" stroke-width="1.05"/></svg>
<svg width="12" height="13" viewBox="0 0 12 13" style="position:absolute;left:653.5px;top:502px"><path d="M1.2 2.6h9.6v9.2H1.2z" fill="none" stroke="#6b6b75" stroke-width="1.2" stroke-linejoin="round"/><path d="M4.5 2.6q1.5-2 3 0" fill="none" stroke="#6b6b75" stroke-width="1.1"/><path d="M3.2 7l2 2 3.8-4" fill="none" stroke="#6b6b75" stroke-width="1.2"/></svg>
<svg width="12" height="13" viewBox="0 0 12 13" style="position:absolute;left:747px;top:503px"><path d="M6.2 1.92A4.6 4.6 0 0 1 6.80 11.03M5.20 11.03A4.6 4.6 0 0 1 1.9 4.4" fill="none" stroke="#6b6b75" stroke-width="1.3"/><path d="M7.2 0.1v3.6L4.3 1.9z" fill="#6b6b75"/></svg>
<svg width="13" height="13" viewBox="0 0 13 13" style="position:absolute;left:840.5px;top:503px"><path d="M4.2 1h4.6L12 4.2v4.6L8.8 12H4.2L1 8.8V4.2z" fill="none" stroke="#6b6b75" stroke-width="1.2" stroke-linejoin="round"/><path d="M6.5 3.8v3.6M6.5 8.6v1" stroke="#6b6b75" stroke-width="1.2"/></svg>
<svg width="16" height="10" viewBox="0 0 16 10" style="position:absolute;left:932.5px;top:505px"><path d="M1 4.5l3 3M4.5 4.5l3 3L14 1.2M7.5 4.6L11 1.2" fill="none" stroke="#6b6b75" stroke-width="1.2"/></svg>
<div class="bd" style="left:577px;top:502px;background:#f9c6df;color:#ee5aa5">5</div>
<div class="bd" style="left:671px;top:502px;background:#dff3df;color:#72c484">0</div>
<div class="bd" style="left:765px;top:502px;background:#fff0c6;color:#eca03c">0</div>
<div class="bd" style="left:859px;top:502px;background:#fadcdc;color:#ef6464">4</div>
<div class="bd" style="left:952.5px;top:502px;background:#fadcf7;color:#d264ae">0</div>
<svg width="12" height="12" viewBox="0 0 12 12" style="position:absolute;left:1144px;top:503px"><path d="M10 7A4.4 4.4 0 1 1 8.9 2.6" fill="none" stroke="#4d3ff0" stroke-width="1.4"/><path d="M6.8 3.8L10.6 4.2 10.3 0.6z" fill="#4d3ff0"/></svg>
<div class="t lnk" style="left:1164px;top:502.10px">Refresh loading</div>
<svg width="10" height="12" viewBox="0 0 10 12" style="position:absolute;left:121px;top:544px"><path d="M1.2 1.1h4.9l2.8 2.8v7H1.2z" fill="none" stroke="#5b4fe6" stroke-width="1.15" stroke-linejoin="round"/><path d="M6 1.1v2.9h2.9" fill="none" stroke="#5b4fe6" stroke-width="1"/></svg>
<div class="t lnk" style="left:136px;top:543.35px">SunshineOrderImport...</div>
<div class="t nm" style="left:262px;top:543.35px">Karin Strykowski</div>
<svg width="12" height="12" viewBox="0 0 12 12" style="position:absolute;left:346px;top:544px"><circle cx="6" cy="6" r="5.2" fill="none" stroke="#666" stroke-width="1.1"/><path d="M6 5.2v3.6M6 3.3v.9" stroke="#666" stroke-width="1.2"/></svg>
<div class="t dt" style="left:382px;top:542.55px">6/23/2024</div>
<svg width="11" height="9" viewBox="0 0 11 9" style="position:absolute;left:465px;top:546px"><path d="M1 4.5l3 3L10 1.2" fill="none" stroke="#55bf9f" stroke-width="1.3"/></svg>
<div class="t conf" style="left:481px;top:543.35px">Confirmed</div>
<svg width="12" height="12" viewBox="0 0 12 12" style="position:absolute;left:559.5px;top:544px"><rect x="1" y="1" width="10" height="10" rx="0.8" fill="none" stroke="#6b6b75" stroke-width="1.2"/><path d="M3 3.6h1.2M5.4 3.6h3.6M3 6h1.2M5.4 6h3.6M3 8.4h1.2M5.4 8.4h3.6" stroke="#6b6b75" stroke-width="1.05"/></svg>
<svg width="12" height="13" viewBox="0 0 12 13" style="position:absolute;left:653.5px;top:543px"><path d="M1.2 2.6h9.6v9.2H1.2z" fill="none" stroke="#6b6b75" stroke-width="1.2" stroke-linejoin="round"/><path d="M4.5 2.6q1.5-2 3 0" fill="none" stroke="#6b6b75" stroke-width="1.1"/><path d="M3.2 7l2 2 3.8-4" fill="none" stroke="#6b6b75" stroke-width="1.2"/></svg>
<svg width="12" height="13" viewBox="0 0 12 13" style="position:absolute;left:747px;top:544px"><path d="M6.2 1.92A4.6 4.6 0 0 1 6.80 11.03M5.20 11.03A4.6 4.6 0 0 1 1.9 4.4" fill="none" stroke="#6b6b75" stroke-width="1.3"/><path d="M7.2 0.1v3.6L4.3 1.9z" fill="#6b6b75"/></svg>
<svg width="13" height="13" viewBox="0 0 13 13" style="position:absolute;left:840.5px;top:544px"><path d="M4.2 1h4.6L12 4.2v4.6L8.8 12H4.2L1 8.8V4.2z" fill="none" stroke="#6b6b75" stroke-width="1.2" stroke-linejoin="round"/><path d="M6.5 3.8v3.6M6.5 8.6v1" stroke="#6b6b75" stroke-width="1.2"/></svg>
<svg width="16" height="10" viewBox="0 0 16 10" style="position:absolute;left:932.5px;top:546px"><path d="M1 4.5l3 3M4.5 4.5l3 3L14 1.2M7.5 4.6L11 1.2" fill="none" stroke="#6b6b75" stroke-width="1.2"/></svg>
<div class="bd" style="left:577px;top:543px;background:#f9c6df;color:#ee5aa5">6</div>
<div class="bd" style="left:671px;top:543px;background:#dff3df;color:#72c484">0</div>
<div class="bd" style="left:765px;top:543px;background:#fff0c6;color:#eca03c">0</div>
<div class="bd" style="left:859px;top:543px;background:#fadcdc;color:#ef6464">6</div>
<div class="bd" style="left:952.5px;top:543px;background:#fadcf7;color:#d264ae">0</div>
<svg width="12" height="12" viewBox="0 0 12 12" style="position:absolute;left:1144px;top:544px"><path d="M10 7A4.4 4.4 0 1 1 8.9 2.6" fill="none" stroke="#4d3ff0" stroke-width="1.4"/><path d="M6.8 3.8L10.6 4.2 10.3 0.6z" fill="#4d3ff0"/></svg>
<div class="t lnk" style="left:1164px;top:543.35px">Refresh loading</div>

<div style="position:absolute;left:1276px;top:49px;width:4px;height:426px;background:#dcdcdc;border-radius:2px"></div>

<div style="position:absolute;left:79px;top:70.5px;width:263.5px;height:160.5px;border-radius:3px;background:#140c4e;border:1px solid #ebeaf2;box-shadow:0 3px 8px rgba(20,20,60,0.12)"></div>
<div class="mi" style="top:88px">Action Center</div>
<div class="mb" style="left:263px;top:87.5px;width:29px;background:#f07a6c">2074</div>
<div class="mb" style="left:294px;top:87.5px;width:15.5px;background:#e8a346">3</div>
<div class="mb" style="left:312.5px;top:87.5px;width:15.5px;background:#e9b462">5</div>
<div class="mi" style="top:125.5px">Open Orders</div>
<div class="mb" style="left:290.5px;top:124.5px;width:17px;height:16px;line-height:16px;background:#ebc74e">66</div>
<div class="mb" style="left:310px;top:124.5px;width:18px;height:16px;line-height:16px;background:#8fcc8f">78</div>
<div class="mi" style="top:163px">Order History</div>
<div style="position:absolute;left:86px;top:189.5px;width:251px;height:36px;border-radius:3px;background:#5b5587"></div>
<div class="mi" style="top:200px">Order Import</div>

</body></html>
